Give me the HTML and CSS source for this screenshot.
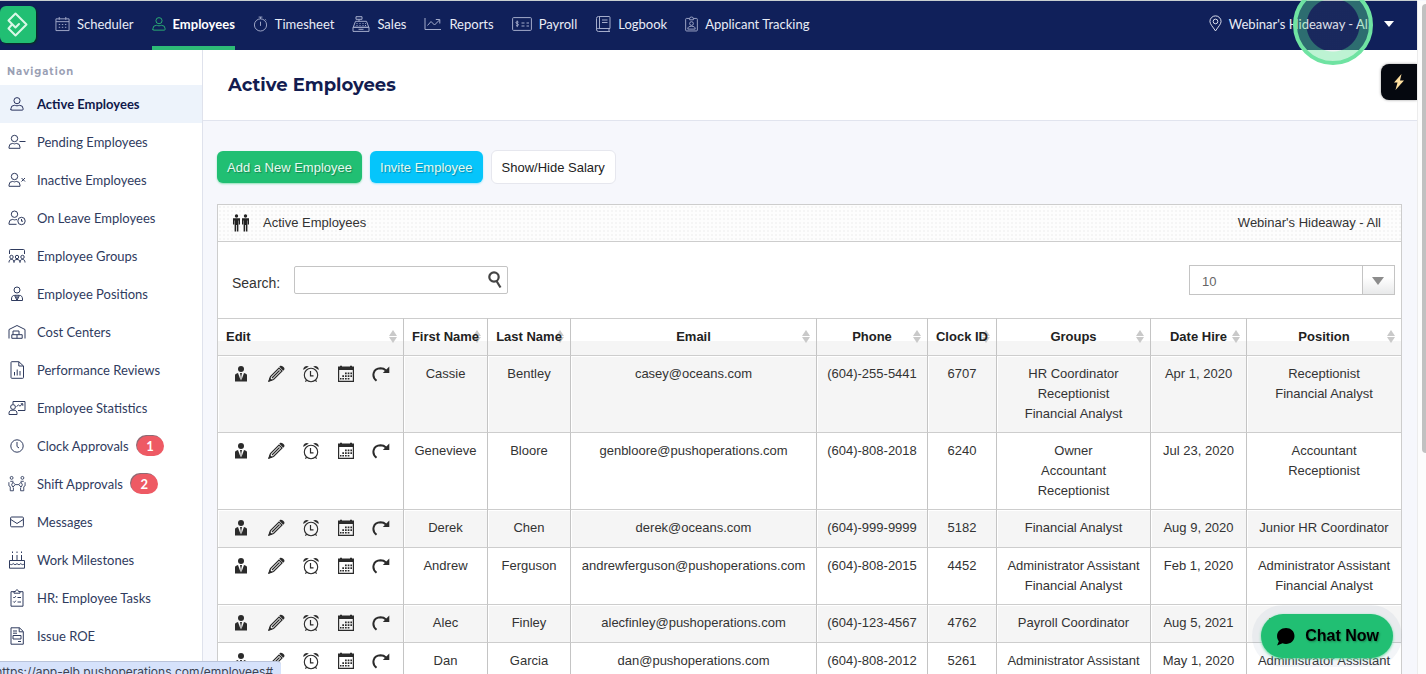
FILE: index.html
```html
<!DOCTYPE html>
<html lang="en">

<head>
    <meta charset="utf-8">
    <title>Active Employees</title>
    <link rel="stylesheet" href="styles.css">
</head>

<body>
    <!-- Icon sprite -->
    <svg class="sprite">
        <symbol id="i-calendar" viewBox="0 0 16 16"><path d="M1 2.500h14v12.500H1zM1 5.500h14M4.500.5v3M11.500.5v3M4 8.500h1.500M7.300 8.500h1.500M10.600 8.500h1.500M4 11.500h1.500M7.300 11.500h1.500M10.600 11.500h1.500"/></symbol>
        <symbol id="i-user" viewBox="0 0 16 16"><circle cx="8" cy="4.200" r="3.500"/><path d="M1 15v-1.500a4 4 0 0 1 4-4c1 0 1.700.6 3 .6s2-.6 3-.6a4 4 0 0 1 4 4V14a1 1 0 0 1-1 1H2a1 1 0 0 1-1-1"/></symbol>
        <symbol id="i-stopwatch" viewBox="0 0 16 16"><circle cx="8" cy="9" r="6.500"/><path d="M6 .6h4M8 .6v2M8 5.500V10M13 3l1 1"/></symbol>
        <symbol id="i-register" viewBox="0 0 18 16"><path d="M4 .7h6v2.600H4zM7 3.300v2M3.500 5.300h11l2.300 6H1.200zM1 11.300h16V15.400H1zM4.500 7.500h1M7.500 7.500h1M10.500 7.500h1M13 7.500h.8M4.500 9.500h1M7.500 9.500h1M10.500 9.500h1M13 9.500h1M6.500 13.300h5"/></symbol>
        <symbol id="i-chart" viewBox="0 0 18 16"><path d="M1 2v11.500h16M3.500 9.500l3.500-4 3.500 3.500L15.500 4M11.800 3.500h4v4"/></symbol>
        <symbol id="i-check" viewBox="0 0 20 14"><rect x=".6" y=".6" width="18.800" height="12.800" rx="1"/><path d="M9.500 6h3M14.500 6H17M9.500 9h3M14.500 9H17M6.500 5.200c-.5-.8-2.500-.7-2.500.5s2.500.8 2.500 2-2 1.300-2.600.4M5.200 3.600v6.500"/></symbol>
        <symbol id="i-book" viewBox="0 0 16 16"><path d="M15 12.500V1.500a1 1 0 0 0-1-1H3.500A2 2 0 0 0 1.500 2.500v11a2 2 0 0 0 2 2H15M15 12.500H3.500a1.500 1.500 0 0 0-2 1.500M14 12.500v3M4.500.5v12M7 4h5.500M7 6.500h5.500"/></symbol>
        <symbol id="i-badge" viewBox="0 0 14 16"><path d="M5 2H1.500a1 1 0 0 0-.8 1v11.500a1 1 0 0 0 1 1h10.600a1 1 0 0 0 1-1V3a1 1 0 0 0-1-1H9M5 3.500V2a2 1.500 0 0 1 4 0v1.500zM3 13.500h8c0-2.500-1.500-3-4-3s-4 .5-4 3z"/><circle cx="7" cy="7.500" r="2"/></symbol>
        <symbol id="i-pin" viewBox="0 0 14 18"><path d="M7 17C4 12.500 1 9.500 1 6.800a6 6 0 0 1 12 0C13 9.500 10 12.500 7 17z"/><circle cx="7" cy="6.800" r="2.500"/></symbol>

        <symbol id="i-user-minus" viewBox="0 0 18 16"><circle cx="6.500" cy="4.500" r="3.200"/><path d="M1 14.300v-1.200a3.700 3.700 0 0 1 3.700-3.700c.8 0 1 .5 1.800.5s1-.5 1.800-.5a3.700 3.700 0 0 1 3.700 3.700v1.200zM11.500 7.500h6"/></symbol>
        <symbol id="i-user-x" viewBox="0 0 18 16"><circle cx="6.500" cy="4.500" r="3.200"/><path d="M1 14.300v-1.200a3.700 3.700 0 0 1 3.700-3.700c.8 0 1 .5 1.800.5s1-.5 1.800-.5a3.700 3.700 0 0 1 3.700 3.700v1.200zM13.500 6l3.500 3.500M17 6l-3.500 3.500"/></symbol>
        <symbol id="i-user-clock" viewBox="0 0 18 16"><circle cx="6.500" cy="4.200" r="3.200"/><path d="M8.500 14.300H1v-1.200a3.700 3.700 0 0 1 3.700-3.700c.8 0 1 .5 1.800.5s1.500-.5 2.500-.3"/><circle cx="13.500" cy="11" r="3.700"/><path d="M13.500 9v2.200h1.500"/></symbol>
        <symbol id="i-groups" viewBox="0 0 18 16"><path d="M1.500 6V2.500a1 1 0 0 1 1-1h13a1 1 0 0 1 1 1V6M1 14.500c0-2.200.8-3 2.500-3s2.500.8 2.500 3c0-2.200 1.200-3 3-3s3 .8 3 3c0-2.200.8-3 2.500-3s2.500.8 2.500 3"/><circle cx="3.500" cy="9" r="1.700"/><circle cx="9" cy="9" r="1.700"/><circle cx="14.500" cy="9" r="1.700"/></symbol>
        <symbol id="i-tie" viewBox="0 0 18 16"><circle cx="9" cy="4" r="3"/><path d="M3.500 14.500V13c0-2.500 1.500-3.700 3-3.700L9 14.500l2.500-5.200c1.500 0 3 1.200 3 3.700v1.500zM7 9.300h4L9 11.500zM9 11v3.500"/></symbol>
        <symbol id="i-warehouse" viewBox="0 0 18 16"><path d="M1 14.500V5.500L9 1.500l8 4v9M3.800 14.300V10.700h10.400v3.600zM5 10.700V7h6v3.700M9 10.700v3.600"/></symbol>
        <symbol id="i-report" viewBox="0 0 18 18"><path d="M3 1.500a.8.800 0 0 1 .8-.8h7L15.500 5v11.500a.8.800 0 0 1-.8.800H3.800a.8.800 0 0 1-.8-.8zM10.800.7V5h4.700M6.500 14.500V11M9.200 14.500V8.500M12 14.500V10"/></symbol>
        <symbol id="i-statistics" viewBox="0 0 18 16"><path d="M5 4V1.500h12v9h-7M1 14.500v-1.300c0-2 1.300-3 3-3h2c1.700 0 3 1 3 3v1.300zM8.500 6.500l2-1.500 1.500 1.200 2.500-2.400M12.800 3.800h2v2"/><circle cx="5" cy="7" r="2.400"/></symbol>
        <symbol id="i-clock" viewBox="0 0 18 16"><circle cx="9" cy="8" r="6.200"/><path d="M9 4v4.500l2 1.500"/></symbol>
        <symbol id="i-swap" viewBox="0 0 20 18"><circle cx="4" cy="2.200" r="1.600"/><circle cx="16" cy="2.200" r="1.600"/><path d="M2.500 6h3.500M1 7v4l1.500 1v4.500h3.500V13M17.500 6H14M19 7v4l-1.500 1v4.500H14V13M5.500 7L8 9.700 5.500 12.500 4 10zM14.500 7L12 9.700l2.500 2.800L16 10zM8 9.700h4"/></symbol>
        <symbol id="i-mail" viewBox="0 0 18 16"><rect x="2.600" y="3" width="12.800" height="9.800" rx="1"/><path d="M2.800 5.500L9 9.500l6.200-4"/></symbol>
        <symbol id="i-cake" viewBox="0 0 18 18"><path d="M1.500 9.500h15v7.700h-15zM1.500 12.500c1.200 1.500 2.500 1.500 3.700 0 1.200 1.500 2.600 1.500 3.800 0 1.200 1.500 2.600 1.500 3.800 0 1.200 1.500 2.500 1.500 3.700 0M4.500 9V4M9 9V4M13.500 9V4M4.500.5v1.500M9 .5v1.500M13.500.5v1.500"/></symbol>
        <symbol id="i-tasks" viewBox="0 0 18 18"><path d="M6 2.700H3v14.500h12V2.700h-3M6 4.200V2.500h1.500C7.700.3 10.300.3 10.500 2.500H12v1.700zM5.300 8l1 1 1.500-1.800M5.300 12.500l1 1 1.500-1.800M9.500 8.500H13M9.500 13H13"/></symbol>
        <symbol id="i-document" viewBox="0 0 18 18"><path d="M3 .8h8.500L15.300 4.500v12.700H3zM11.200.8v4h4M5 4h4M5 6.200h4M5 8.500h8v3.500H5zM5 8.500h8M10 14.500h3"/></symbol>

        <!-- Row actions -->
        <symbol id="a-profile" viewBox="0 0 18 18"><circle cx="9" cy="4" r="3"/><path d="M3 16.500V10.500c0-1.500 1-2 3-2.500l2.700 7.500V11.500L8 8h2l-.7 3.500v4L12 8c2 .5 3 1 3 2.500v6z"/></symbol>
        <symbol id="a-edit" viewBox="0 0 18 18"><path fill="none" stroke="currentColor" stroke-width="1.200" d="M2.200 15.800l1.300-4.300L12 3l3 3-8.500 8.500zM5 13l7.500-7.500"/><path d="M1 17l1.600-4.500L5.500 15.400zM12.300 1.800l1-1q1-.6 2.900 1t1 2.900l-1 1z"/></symbol>
        <symbol id="a-alarm" viewBox="0 0 18 18"><circle fill="none" stroke="currentColor" stroke-width="1.100" cx="9" cy="10" r="6.700"/><path fill="none" stroke="currentColor" stroke-width="1.200" d="M8.500 6v4.800h3M4.500 15l-1 1.700M13.500 15l1 1.700"/><path d="M1.300 5A3.500 3.500 0 0 1 6.800 1.600zM16.700 5a3.500 3.500 0 0 0-5.500-3.400z"/></symbol>
        <symbol id="a-schedule" viewBox="0 0 18 18"><path fill="none" stroke="currentColor" stroke-width="1.200" d="M1.600 3v13.400h14.800V3"/><path d="M1 1.500h2V.7h2v.8h8V.7h2v.8h2V5H1zM8 7.500h1.700v1.700H8zM10.700 7.500h1.700v1.700h-1.700zM13.400 7.500h1.600v1.700h-1.600zM5.300 10.200H7v1.700H5.300zM8 10.200h1.700v1.700H8zM10.700 10.200h1.700v1.700h-1.700zM13.400 10.200h1.600v1.700h-1.600zM3 12.900h1.500v1.700H3zM5.300 12.900H7v1.700H5.300zM8 12.900h1.700v1.700H8zM10.700 12.900h1.700v1.700h-1.700z"/></symbol>
        <symbol id="a-transfer" viewBox="0 0 18 18"><path fill="none" stroke="currentColor" stroke-width="2" d="M4.500 15.800C-.8 11.500 1 3.500 8.500 3.300c2.500 0 4.200.9 5.500 2.200"/><path d="M17.300 1.500v6.500H10.800z"/></symbol>
    </svg>

    <header class="topbar">
        <a class="logo" href="#" aria-label="Home">
            <svg viewBox="0 6 36 37"><path d="M19 24l-3.500 3.500-7-7 7-7 11 11L15.500 35.500 8.500 28.500l3-3.500"/></svg>
        </a>
        <nav class="topnav">
            <a href="#"><svg class="icon" width="15" height="16"><use href="#i-calendar"/></svg>Scheduler</a>
            <a href="#" class="active"><svg class="icon" width="14" height="16"><use href="#i-user"/></svg>Employees</a>
            <a href="#"><svg class="icon" width="15" height="16"><use href="#i-stopwatch"/></svg>Timesheet</a>
            <a href="#"><svg class="icon" width="18" height="16"><use href="#i-register"/></svg>Sales</a>
            <a href="#"><svg class="icon" width="18" height="16"><use href="#i-chart"/></svg>Reports</a>
            <a href="#"><svg class="icon" width="20" height="14"><use href="#i-check"/></svg>Payroll</a>
            <a href="#"><svg class="icon" width="16" height="16"><use href="#i-book"/></svg>Logbook</a>
            <a href="#"><svg class="icon" width="13" height="16"><use href="#i-badge"/></svg>Applicant Tracking</a>
        </nav>
        <button class="location" type="button">
            <svg class="icon" width="13" height="17"><use href="#i-pin"/></svg>
            Webinar's Hideaway - All
            <span class="caret"></span>
        </button>
    </header>

    <div class="layout">
        <aside class="sidebar">
            <h2>Navigation</h2>
            <nav>
                <a href="#" class="active"><svg class="icon"><use href="#i-user" x="2" y="2" width="14" height="14"/></svg>Active Employees</a>
                <a href="#"><svg class="icon"><use href="#i-user-minus"/></svg>Pending Employees</a>
                <a href="#"><svg class="icon"><use href="#i-user-x"/></svg>Inactive Employees</a>
                <a href="#"><svg class="icon"><use href="#i-user-clock"/></svg>On Leave Employees</a>
                <a href="#"><svg class="icon"><use href="#i-groups"/></svg>Employee Groups</a>
                <a href="#"><svg class="icon"><use href="#i-tie"/></svg>Employee Positions</a>
                <a href="#"><svg class="icon"><use href="#i-warehouse"/></svg>Cost Centers</a>
                <a href="#"><svg class="icon"><use href="#i-report"/></svg>Performance Reviews</a>
                <a href="#"><svg class="icon"><use href="#i-statistics"/></svg>Employee Statistics</a>
                <a href="#"><svg class="icon"><use href="#i-clock"/></svg>Clock Approvals <span class="count">1</span></a>
                <a href="#"><svg class="icon"><use href="#i-swap"/></svg>Shift Approvals <span class="count">2</span></a>
                <a href="#"><svg class="icon"><use href="#i-mail"/></svg>Messages</a>
                <a href="#"><svg class="icon"><use href="#i-cake"/></svg>Work Milestones</a>
                <a href="#"><svg class="icon"><use href="#i-tasks"/></svg>HR: Employee Tasks</a>
                <a href="#"><svg class="icon"><use href="#i-document"/></svg>Issue ROE</a>
            </nav>
        </aside>

        <main>
            <div class="page-title">
                <h1>Active Employees</h1>
            </div>

            <div class="content">
                <div class="actions">
                    <button type="button" class="btn btn-add">Add a New Employee</button>
                    <button type="button" class="btn btn-invite">Invite Employee</button>
                    <button type="button" class="btn btn-plain">Show/Hide Salary</button>
                </div>

                <section class="card">
                    <div class="card-header">
                        <svg class="people" viewBox="0 0 18 18"><circle cx="4.500" cy="2" r="1.700"/><circle cx="13.500" cy="2" r="1.700"/><path d="M1 4.300h7v6.200H6.800V6.500h-.4V17.500H4.900V11h-.8v6.500H2.600v-11h-.4v4H1zM10 4.300h7v6.200h-1.200v-4h-.4v11h-1.500V11h-.8v6.500h-1.500v-11h-.4v4H10z"/></svg>
                        <span>Active Employees</span>
                        <span class="card-location">Webinar's Hideaway - All</span>
                    </div>

                    <div class="filters">
                        <label for="search">Search:</label>
                        <div class="search">
                            <input type="text" id="search">
                            <svg viewBox="0 0 14 18"><circle cx="6" cy="6" r="4.700"/><path d="M8.500 10l4 6.500"/></svg>
                        </div>
                        <div class="page-size">
                            <select id="pageSize" aria-label="Rows per page">
                                <option selected>10</option>
                                <option>25</option>
                                <option>50</option>
                                <option>100</option>
                            </select>
                        </div>
                    </div>

                    <table>
                        <colgroup>
                            <col class="col-edit">
                            <col class="col-first">
                            <col class="col-last">
                            <col class="col-email">
                            <col class="col-phone">
                            <col class="col-clock">
                            <col class="col-groups">
                            <col class="col-date">
                            <col class="col-position">
                        </colgroup>
                        <thead>
                            <tr>
                                <th class="edit">Edit</th>
                                <th>First Name</th>
                                <th>Last Name</th>
                                <th>Email</th>
                                <th>Phone</th>
                                <th>Clock ID</th>
                                <th>Groups</th>
                                <th>Date Hire</th>
                                <th>Position</th>
                            </tr>
                        </thead>
                        <tbody id="employees"></tbody>
                    </table>
                </section>
            </div>
        </main>
    </div>

    <button type="button" class="quick" aria-label="Quick actions">
        <svg viewBox="0 0 12 16"><path d="M8.500 0L1 8.500h3.500L2.500 16 11 6.500H7z"/></svg>
    </button>
    <div class="click-ring"></div>
    <div class="scrollbar"><div class="thumb"></div></div>
    <button type="button" class="chat">
        <svg viewBox="0 0 18 18"><path d="M9.500 1C14 1 17.500 4 17.500 8.500S14 16 9.500 16c-1.300 0-2.300-.2-3.300-.6L1 17.500l1.700-4C1.500 12 1 10.300 1 8.500 1 4 5 1 9.500 1z"/></svg>
        Chat Now
    </button>
    <div class="status"><span>https://app-elb.pushoperations.com/employees#</span></div>

    <script>
        const employees = [
            ['Cassie', 'Bentley', 'casey@oceans.com', '(604)-255-5441', '6707', ['HR Coordinator', 'Receptionist', 'Financial Analyst'], 'Apr 1, 2020', ['Receptionist', 'Financial Analyst']],
            ['Genevieve', 'Bloore', 'genbloore@pushoperations.com', '(604)-808-2018', '6240', ['Owner', 'Accountant', 'Receptionist'], 'Jul 23, 2020', ['Accountant', 'Receptionist']],
            ['Derek', 'Chen', 'derek@oceans.com', '(604)-999-9999', '5182', ['Financial Analyst'], 'Aug 9, 2020', ['Junior HR Coordinator']],
            ['Andrew', 'Ferguson', 'andrewferguson@pushoperations.com', '(604)-808-2015', '4452', ['Administrator Assistant', 'Financial Analyst'], 'Feb 1, 2020', ['Administrator Assistant', 'Financial Analyst']],
            ['Alec', 'Finley', 'alecfinley@pushoperations.com', '(604)-123-4567', '4762', ['Payroll Coordinator'], 'Aug 5, 2021', ['Payroll Coordinator']],
            ['Dan', 'Garcia', 'dan@pushoperations.com', '(604)-808-2012', '5261', ['Administrator Assistant'], 'May 1, 2020', ['Administrator Assistant']]
        ];

        const rowActions = ['profile', 'edit', 'alarm', 'schedule', 'transfer'];

        function renderRow(employee) {
            const links = rowActions
                .map(name => `<a href="#" aria-label="${name}"><svg><use href="#a-${name}"/></svg></a>`)
                .join('');
            const cells = employee
                .map(value => `<td>${Array.isArray(value) ? value.join('<br>') : value}</td>`)
                .join('');
            return `<tr><td class="edit"><div class="row-actions">${links}</div></td>${cells}</tr>`;
        }

        document.getElementById('employees').innerHTML = employees.map(renderRow).join('');
    </script>
</body>

</html>
```

FILE: styles.css
```css
* {
    box-sizing: border-box;
}

body {
    margin: 0;
    padding-right: 9px;
    height: 100vh;
    overflow: hidden;
    display: flex;
    flex-direction: column;
    background: #f6f7fc;
    color: #333;
    font-family: "Liberation Sans", Arial, sans-serif;
    font-size: 13px;
}

a {
    color: inherit;
    text-decoration: none;
}

button {
    font: inherit;
    cursor: pointer;
}

.sprite {
    display: none;
}

.icon {
    flex: none;
    fill: none;
    stroke: currentColor;
    stroke-width: 1;
}

/* Top bar */
.topbar {
    flex: none;
    display: flex;
    align-items: stretch;
    height: 50px;
    background: #10205a;
    border-top: 1px solid #c9cfd0;
    color: #e9ecf6;
    font-family: Lato, sans-serif;
}

.logo {
    width: 36px;
    height: 37px;
    margin: 5px 19px 0 0;
    background: #21bf73;
    border-radius: 6px;
    box-shadow: 1px 1px 2px #07331f;
}

.logo svg {
    display: block;
    width: 36px;
    height: 37px;
    fill: none;
    stroke: #d9f8e7;
    stroke-width: 2;
    stroke-linejoin: round;
    stroke-linecap: round;
}

.topnav {
    display: flex;
    gap: 18px;
}

.topnav a {
    display: flex;
    align-items: center;
    gap: 7px;
    white-space: nowrap;
    border-bottom: 4px solid transparent;
}

.topnav .icon {
    color: #a4accb;
}

.topnav .active {
    color: #fff;
    font-weight: bold;
    border-bottom-color: #2dbb77;
}

.topnav .active .icon {
    color: #2dbb77;
}

.location {
    display: flex;
    align-items: center;
    gap: 7px;
    margin-left: auto;
    padding: 0 23px 4px 0;
    border: 0;
    background: none;
    color: inherit;
    white-space: nowrap;
}

.caret {
    margin-left: 6px;
    border: 5px solid transparent;
    border-top: 6px solid #fff;
    border-bottom: 0;
}

/* Sidebar */
.layout {
    flex: 1;
    min-height: 0;
    display: flex;
}

.sidebar {
    flex: none;
    width: 203px;
    overflow: hidden;
    background: #fff;
    border-right: 1px solid #dfe2ec;
    font-family: Lato, sans-serif;
    color: #2f3b5e;
}

.sidebar h2 {
    margin: 0;
    padding: 14px 7px 5px;
    font-family: Montserrat, Inter, sans-serif;
    font-size: 10px;
    line-height: 16px;
    font-weight: 700;
    letter-spacing: 1px;
    color: #9aa0b4;
}

.sidebar a {
    display: flex;
    align-items: center;
    height: 38px;
    padding-left: 8px;
    white-space: nowrap;
}

.sidebar .icon {
    width: 18px;
    height: 18px;
    margin-right: 11px;
}

.sidebar .active {
    background: #edf3fb;
    color: #10194a;
    font-weight: bold;
}

.count {
    width: 27px;
    margin-left: 8px;
    border-radius: 10px;
    background: #ee5a64;
    box-shadow: -1px -1px 0 #8f6a74;
    color: #fff;
    font-weight: bold;
    line-height: 20px;
    text-align: center;
}

/* Page */
main {
    flex: 1;
    min-width: 0;
}

.page-title {
    padding: 20px 25px;
    background: #fff;
    border-bottom: 1px solid #e1e4ee;
}

.page-title h1 {
    margin: 0;
    font-family: Montserrat, Inter, sans-serif;
    font-size: 18px;
    line-height: 30px;
    font-weight: 700;
    color: #131c50;
}

.content {
    padding: 29px 15px 0 14px;
}

.actions {
    display: flex;
    align-items: center;
    gap: 8px;
    margin-bottom: 20px;
}

.btn {
    height: 32px;
    padding: 0 10px;
    border: 0;
    border-radius: 6px;
    color: #e4fbf0;
    text-shadow: 1px 1px 1px rgba(0, 0, 0, 0.3);
}

.btn-add {
    background: #21bf73;
    box-shadow: 0 1px 2px #8fe0b8;
}

.btn-invite {
    background: #05c5fb;
    box-shadow: 0 1px 2px #9be5fb;
}

.btn-plain {
    height: 34px;
    background: #fff;
    border: 1px solid #e6e7ee;
    color: #222;
    text-shadow: none;
}

/* Card */
.card {
    background: #fff;
    border: 1px solid #cdcdcd;
    border-bottom: 0;
}

.card-header {
    display: flex;
    align-items: center;
    height: 37px;
    padding: 0 20px 1px 14px;
    border-bottom: 1px solid #cdcdcd;
    background: radial-gradient(#f5f5f5 1px, transparent 1px) 0 0 / 4px 4px, #fdfdfd;
}

.people {
    width: 18px;
    height: 18px;
    margin-right: 13px;
    fill: #222;
}

.card-location {
    margin-left: auto;
}

.filters {
    display: flex;
    align-items: center;
    height: 76px;
    padding: 0 6px 0 14px;
}

.filters label {
    margin: 5px 14px 0 0;
    font-size: 14px;
}

.search {
    position: relative;
}

.search input {
    display: block;
    width: 214px;
    height: 28px;
    padding: 0 30px 0 8px;
    border: 1px solid #c4c4c4;
    border-radius: 2px;
    font: inherit;
}

.search svg {
    position: absolute;
    right: 6px;
    top: 5px;
    width: 14px;
    height: 18px;
    fill: none;
    stroke: #444;
    stroke-width: 2.200;
}

.page-size {
    position: relative;
    width: 206px;
    margin-left: auto;
}

.page-size select {
    display: block;
    width: 100%;
    height: 30px;
    padding: 2px 12px 0;
    appearance: none;
    border: 1px solid #c4c4c4;
    border-radius: 0;
    background: linear-gradient(#fff 40%, #e8e9ea) right / 31px 100% no-repeat, #fff;
    font: inherit;
    color: #666;
}

.page-size::before {
    content: "";
    position: absolute;
    right: 32px;
    top: 0;
    bottom: 0;
    border-left: 1px solid #c4c4c4;
}

.page-size::after {
    content: "";
    position: absolute;
    right: 11px;
    top: 12px;
    border: 6px solid transparent;
    border-top: 8px solid #8c8c8c;
    border-bottom: 0;
}

/* Table */
table {
    width: 100%;
    table-layout: fixed;
    border-collapse: separate;
    border-spacing: 0;
    line-height: 20px;
    text-align: center;
}

.col-edit {
    width: 186px;
}

.col-first {
    width: 84px;
}

.col-last {
    width: 83px;
}

.col-phone {
    width: 111px;
}

.col-clock {
    width: 69px;
}

.col-groups {
    width: 154px;
}

.col-date {
    width: 96px;
}

.col-position {
    width: 154px;
}

th,
td {
    padding: 8px 0;
    border-top: 1px solid #cdcdcd;
    border-right: 1px solid #c4c4c4;
    vertical-align: top;
    white-space: nowrap;
}

th:last-child,
td:last-child {
    border-right: 0;
}

th {
    position: relative;
    z-index: 0;
    color: #222;
    background: linear-gradient(#fff 60%, #f5f5f5 60%);
}

th.edit {
    padding-left: 8px;
    text-align: left;
}

/* Sort handles, one triangle up and one down */
th::before,
th::after {
    content: "";
    position: absolute;
    z-index: -1;
    right: 6px;
    border: 4px solid transparent;
}

th::before {
    top: 11px;
    border-top: 0;
    border-bottom: 6px solid #c9c9c9;
}

th::after {
    top: 18px;
    border-bottom: 0;
    border-top: 6px solid #c9c9c9;
}

tbody tr:nth-child(odd) td {
    background: #f5f5f5;
    box-shadow: inset 1px 1px #fff;
}

.row-actions {
    display: flex;
    gap: 17px;
    height: 21px;
    padding-left: 14px;
}

.row-actions svg {
    display: block;
    width: 18px;
    height: 18px;
    margin-top: 1px;
    fill: currentColor;
    color: #2b2b2b;
}

/* Overlays */
.quick {
    position: fixed;
    top: 64px;
    right: 9px;
    width: 36px;
    height: 36px;
    padding: 0;
    border: 0;
    border-radius: 8px 0 0 8px;
    background: #05080f;
    box-shadow: 0 0 3px rgba(0, 0, 0, 0.4);
}

.quick svg {
    width: 12px;
    height: 16px;
    margin-top: 2px;
    fill: #ffe0a0;
}

.click-ring {
    position: fixed;
    top: -15px;
    right: 53px;
    width: 80px;
    height: 80px;
    border: 4px solid #6fe3a2;
    border-radius: 50%;
    background: radial-gradient(circle, rgba(110, 120, 130, 0.1) 26px, rgba(90, 225, 145, 0.4) 27px);
    pointer-events: none;
}

.scrollbar {
    position: fixed;
    top: 1px;
    right: 0;
    bottom: 0;
    width: 9px;
    padding: 3px 0 0 4px;
    border-left: 1px solid #ececec;
    background: #fcfcfc;
}

.thumb {
    height: 67%;
    border-radius: 4px 0 0 4px;
    background: #c1c1c1;
}

.chat {
    position: fixed;
    right: 33px;
    bottom: 16px;
    display: flex;
    align-items: center;
    gap: 10px;
    height: 44px;
    padding: 0 14px 0 15px;
    border: 0;
    border-radius: 22px;
    background: #21bf73;
    box-shadow: 0 1px 3px #5fd59b, 0 0 0 9px rgba(90, 110, 150, 0.07);
    color: #000;
    font-size: 16px;
    font-weight: bold;
    text-shadow: 1px 1px 2px rgba(0, 0, 0, 0.3);
    white-space: nowrap;
}

.chat svg {
    width: 19px;
    height: 19px;
}

.status {
    position: fixed;
    left: 0;
    bottom: 0;
    display: flex;
    justify-content: flex-end;
    width: 281px;
    height: 13px;
    padding: 2px 8px 0 0;
    overflow: hidden;
    border-top: 1px solid #b9c3da;
    border-radius: 0 4px 0 0;
    background: #d6e2fb;
    color: #3c4252;
    font-family: Inter, sans-serif;
    font-size: 12px;
    line-height: 16px;
    white-space: nowrap;
}
```
